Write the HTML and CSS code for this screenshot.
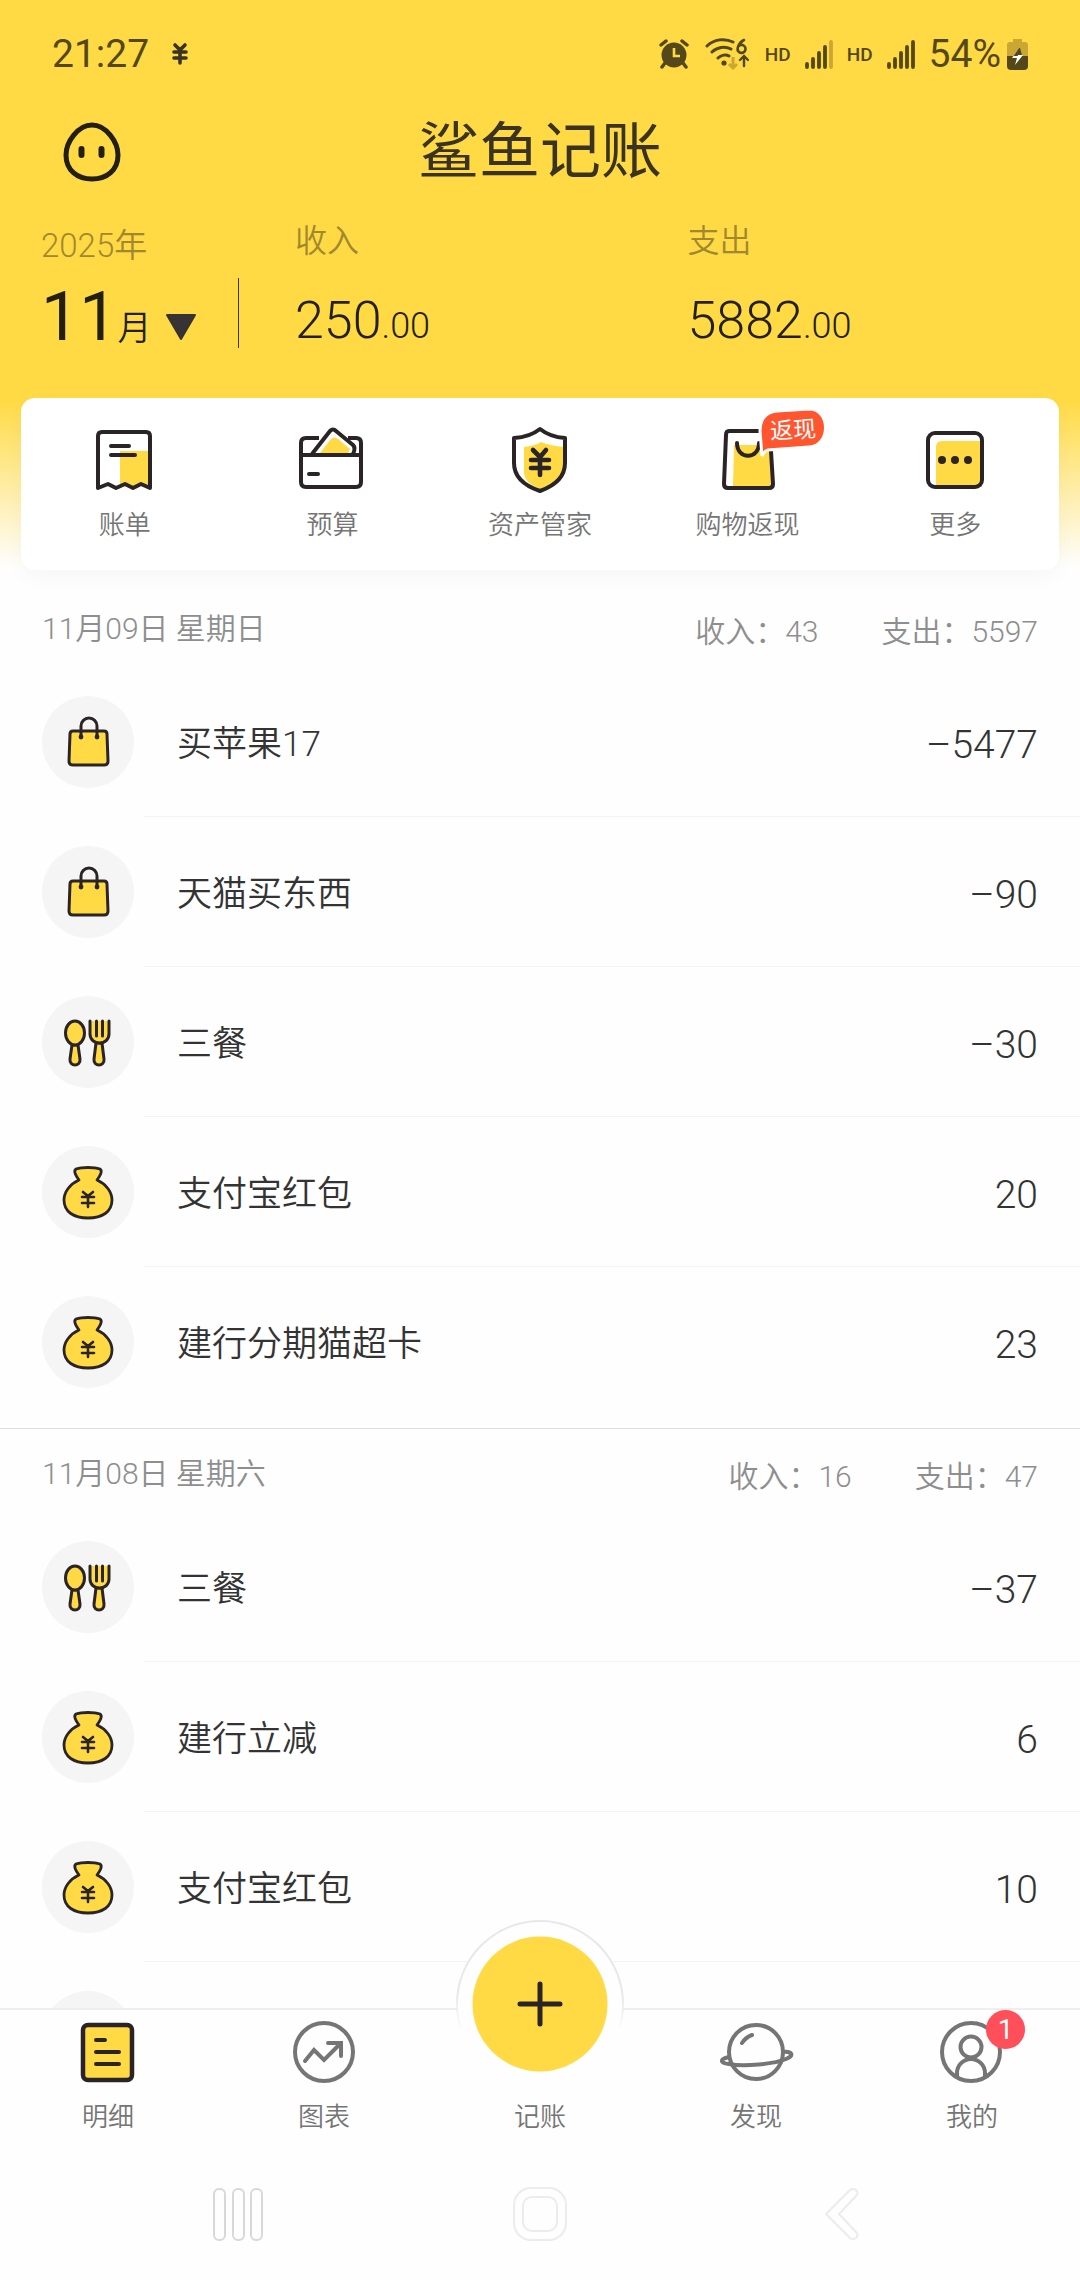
FILE: index.html
```html
<!DOCTYPE html>
<html lang="zh-CN">
<head>
<meta charset="utf-8">
<meta name="viewport" content="width=device-width, initial-scale=1">
<title>鲨鱼记账</title>
<link rel="stylesheet" href="styles.css">
</head>
<body>
<svg class="sprite" aria-hidden="true">
  <symbol id="shopping" viewBox="0 0 92 92">
    <path d="M31 35H62Q65 35 65 38L66 65Q66 69 62 69H31Q27 69 27 65L28 38Q28 35 31 35Z" fill="#ffda44" stroke="#2b2427" stroke-width="3"/>
    <path d="M39 41V30A8 8 0 0 1 55 30V41" fill="none" stroke="#2b2427" stroke-width="3"/>
    <circle cx="39" cy="41" r="2.4" fill="#2b2427"/><circle cx="55" cy="41" r="2.4" fill="#2b2427"/>
  </symbol>
  <symbol id="meal" viewBox="0 0 92 92">
    <g fill="#ffda44" stroke="#2b2427" stroke-width="3" stroke-linejoin="round" stroke-linecap="round">
      <path d="M30 49L28 63C27 71 39 71 38 63L36 49Z"/>
      <ellipse cx="33" cy="37" rx="9.5" ry="12"/>
      <path d="M54 47L52 63C51 71 63 71 62 63L60 47Z"/>
      <path d="M48 25V38C48 50 67 50 67 38V25"/>
      <path d="M54.500 25V40M60.500 25V40"/>
    </g>
  </symbol>
  <symbol id="money" viewBox="0 0 92 92">
    <path d="M37 34C34 30 31 25 34 23C40 21 52 21 58 23C61 25 58 30 55 34C64 38 70 46 70 54C70 66 60 72 46 72S22 66 22 54C22 46 28 38 37 34Z" fill="#ffda44" stroke="#2b2427" stroke-width="2.800" stroke-linejoin="round"/>
    <path d="M41 46L46 50L51 46M40 51H52M40 57H52M46 50V61" fill="none" stroke="#2b2427" stroke-width="2.600" stroke-linecap="round"/>
  </symbol>
  <symbol id="signal" viewBox="0 0 28 30">
    <path d="M2 25V28M8 20V28M14 14V28M20 8V28" fill="none" stroke="#54481b" stroke-width="3.800" stroke-linecap="round"/>
  </symbol>
</svg>

<div class="app">
  <main class="content">
    <header class="hero">
      <div class="status">
        <span class="status-time">21:27</span>
        <svg class="status-yen" viewBox="0 0 18 24" width="18" height="24" aria-hidden="true"><path d="M4 3L9 8L14 3M3 10H15M3 16H15M9 8V21" fill="none" stroke="#3a3322" stroke-width="3.600" stroke-linecap="round"/></svg>
        <svg class="status-alarm" viewBox="0 0 30 30" width="30" height="30" aria-hidden="true"><circle cx="15" cy="16" r="12.500" fill="#54481b"/><path d="M2 6L7 2M28 6L23 2M6 24L3 28M24 24L27 28" stroke="#54481b" stroke-width="3.500" stroke-linecap="round"/><path d="M15 9V17H21" fill="none" stroke="#ffda44" stroke-width="2.600"/></svg>
        <svg class="status-wifi" viewBox="0 0 44 32" width="44" height="32" aria-hidden="true">
          <g fill="none" stroke="#54481b" stroke-width="3" stroke-linecap="round"><path d="M2 8C9 1 20 0 28 4M7 14C12 9 20 8 26 11M13 20C16 17 21 16 24 18"/><path d="M39 2C33 5 31 12 34 14A4 4 0 1 0 33 9" stroke-width="2.600"/><path d="M39 28V19M35 22L39 18L43 22" stroke-width="2.400"/></g>
          <circle cx="19" cy="25" r="2.600" fill="#54481b"/><path d="M28 19V30M24 26L28 30L32 26" fill="none" stroke="#c9a732" stroke-width="3"/>
        </svg>
        <span class="status-hd">HD</span>
        <svg class="status-bars" width="28" height="30" aria-hidden="true"><use href="#signal"/><path d="M26 3V28" stroke="#c9a732" stroke-width="3.800" stroke-linecap="round"/></svg>
        <span class="status-hd">HD</span>
        <svg class="status-bars" width="28" height="30" aria-hidden="true"><use href="#signal"/><path d="M26 3V28" stroke="#54481b" stroke-width="3.800" stroke-linecap="round"/></svg>
        <span class="status-battery">54%</span>
        <svg viewBox="0 0 21 32" width="21" height="32" aria-hidden="true"><path d="M6 1H15V4H18Q21 4 21 7V18H0V7Q0 4 3 4H6Z" fill="#c9a732"/><path d="M0 18H21V28Q21 32 17 32H4Q0 32 0 28Z" fill="#54481b"/><path d="M12 10L5 20H10L8 27L16 17H11Z" fill="#fff"/><path d="M12 10L6.500 18H10.700L11 17H15L13 10Z" fill="#54481b"/></svg>
      </div>

      <div class="titlebar">
        <button class="avatar" type="button" aria-label="头像">
          <svg viewBox="0 0 60 60" width="60" height="60"><path d="M30 3C44 3 56 20 56 33C56 48 45 57 30 57S4 48 4 33C4 20 16 3 30 3Z" fill="none" stroke="#241f14" stroke-width="5"/><path d="M19.500 27V33M39.500 27V33" stroke="#241f14" stroke-width="6" stroke-linecap="round"/></svg>
        </button>
        <h1 class="logo">鲨鱼记账</h1>
      </div>

      <section class="summary">
        <div>
          <div class="year">2025年</div>
          <button class="month" type="button">
            <span class="month-number">11</span><span class="month-unit">月</span>
            <svg class="month-arrow" viewBox="0 0 30 26" width="30" height="26" aria-hidden="true"><path d="M1 1H29L15 25Z" fill="#373234" stroke="#373234" stroke-width="2" stroke-linejoin="round"/></svg>
            <span class="month-divider"></span>
          </button>
        </div>
        <div>
          <div class="summary-label">收入</div>
          <div class="summary-value">250<span class="cents">.00</span></div>
        </div>
        <div>
          <div class="summary-label">支出</div>
          <div class="summary-value">5882<span class="cents">.00</span></div>
        </div>
      </section>

      <nav class="shortcuts">
        <button class="shortcut" type="button">
          <svg class="icon" viewBox="0 0 64 64" aria-hidden="true"><path d="M27 23H57V58L48 56L40 60L32 56L27 58Z" fill="#ffda44"/><path d="M5 60V8Q5 4 9 4H53Q57 4 57 8V60L48 56L40 60L32 56L23 60L15 56Z" fill="none" stroke="#2b2427" stroke-width="4" stroke-linejoin="round"/><path d="M18 18H36M18 27H42" stroke="#2b2427" stroke-width="4" stroke-linecap="round"/></svg>
          账单
        </button>
        <button class="shortcut" type="button">
          <svg class="icon" viewBox="0 0 64 64" aria-hidden="true"><path d="M19 10H6Q1 10 1 15V54Q1 59 6 59H56Q61 59 61 54V15Q61 10 56 10H48M2 27H61" fill="none" stroke="#2b2427" stroke-width="4"/><path d="M20 25L31 11Q34 8 38 11L50 21L48 25Z" fill="#ffda44"/><path d="M12 26L30 3Q33 0 36 3L53 17Q56 20 53 26" fill="none" stroke="#2b2427" stroke-width="4" stroke-linejoin="round"/><path d="M9 46H18" stroke="#2b2427" stroke-width="4" stroke-linecap="round"/></svg>
          预算
        </button>
        <button class="shortcut" type="button">
          <svg class="icon" viewBox="0 0 64 64" aria-hidden="true"><path d="M16 19Q27 18 33 14Q43 18 56 19V35C56 49 45 57 32 61C22 57 16 52 16 44Z" fill="#ffda44"/><path d="M6 10Q22 9 32 1Q42 9 57 10V35C57 50 46 58 32 63C17 58 6 50 6 35Z" fill="none" stroke="#2b2427" stroke-width="4" stroke-linejoin="round"/><path d="M25 22L32 29L38 22M23 32H41M23 40H41M32 29V47" fill="none" stroke="#2b2427" stroke-width="4.600" stroke-linecap="round"/></svg>
          资产管家
        </button>
        <button class="shortcut" type="button">
          <svg class="icon" viewBox="0 0 64 64" aria-hidden="true"><path d="M18 17H54L56 59H17Z" fill="#ffda44"/><path d="M13 3H50Q54 3 54 7L57 56Q57 60 53 60H12Q8 60 8 56L10 7Q10 3 13 3Z" fill="none" stroke="#2b2427" stroke-width="4"/><path d="M21 15C21 32 43 32 43 15" fill="none" stroke="#2b2427" stroke-width="4" stroke-linecap="round"/></svg>
          <svg class="promo" viewBox="0 0 72 54" width="72" height="54"><path d="M21 4L53 2C75 2 75 39 53 40L12 43Q8 44 6 49L4 24C4 10 11 5 21 4Z" fill="#ff5630" stroke="#fff" stroke-width="3"/><text x="14" y="31" transform="rotate(-3 37 23)">返现</text></svg>
          购物返现
        </button>
        <button class="shortcut" type="button">
          <svg class="icon" viewBox="0 0 64 64" aria-hidden="true"><path d="M13 19Q13 13 19 13H59V59H13Z" fill="#ffda44"/><rect x="5" y="5" width="54" height="54" rx="7" fill="none" stroke="#2b2427" stroke-width="4"/><g fill="#2b2427"><circle cx="19" cy="32" r="4"/><circle cx="32" cy="32" r="4"/><circle cx="45" cy="32" r="4"/></g></svg>
          更多
        </button>
      </nav>
    </header>

    <section class="day">
      <div class="day-head"><h2 class="day-date">11月09日 星期日</h2><div class="day-totals"><span>收入：43</span><span>支出：5597</span></div></div>
      <ul class="records">
        <li class="record"><svg class="category"><use href="#shopping"/></svg><div class="record-body"><span>买苹果17</span><span class="amount">–5477</span></div></li>
        <li class="record"><svg class="category"><use href="#shopping"/></svg><div class="record-body"><span>天猫买东西</span><span class="amount">–90</span></div></li>
        <li class="record"><svg class="category"><use href="#meal"/></svg><div class="record-body"><span>三餐</span><span class="amount">–30</span></div></li>
        <li class="record"><svg class="category"><use href="#money"/></svg><div class="record-body"><span>支付宝红包</span><span class="amount">20</span></div></li>
        <li class="record"><svg class="category"><use href="#money"/></svg><div class="record-body"><span>建行分期猫超卡</span><span class="amount">23</span></div></li>
      </ul>
    </section>

    <section class="day">
      <div class="day-head"><h2 class="day-date">11月08日 星期六</h2><div class="day-totals"><span>收入：16</span><span>支出：47</span></div></div>
      <ul class="records">
        <li class="record"><svg class="category"><use href="#meal"/></svg><div class="record-body"><span>三餐</span><span class="amount">–37</span></div></li>
        <li class="record"><svg class="category"><use href="#money"/></svg><div class="record-body"><span>建行立减</span><span class="amount">6</span></div></li>
        <li class="record"><svg class="category"><use href="#money"/></svg><div class="record-body"><span>支付宝红包</span><span class="amount">10</span></div></li>
        <li class="record"><svg class="category"></svg><div class="record-body"></div></li>
      </ul>
    </section>
  </main>

  <footer class="footer">
    <nav class="tabs">
      <button class="tab" type="button">
        <svg class="icon" viewBox="0 0 64 64" aria-hidden="true"><rect x="7" y="5" width="49" height="55" rx="5" fill="#ffda44" stroke="#2b2427" stroke-width="4.500"/><path d="M20 20H29M20 32H43M20 44H43" stroke="#2b2427" stroke-width="4" stroke-linecap="round"/></svg>
        明细
      </button>
      <button class="tab" type="button">
        <svg class="icon outline" viewBox="0 0 64 64" aria-hidden="true"><circle cx="32" cy="32" r="29"/><path d="M13 41L22 30L32 40L48 24M36 23H49V36" stroke-linecap="round"/></svg>
        图表
      </button>
      <button class="tab" type="button">
        <span class="icon"></span>
        <svg class="add" viewBox="0 0 168 168" width="168" height="168" aria-hidden="true">
          <defs><linearGradient id="ring" x1="0" y1="0" x2="0" y2="1"><stop offset=".45" stop-color="#e8e8e8"/><stop offset=".66" stop-color="#e8e8e8" stop-opacity="0"/></linearGradient></defs>
          <circle cx="84" cy="84" r="83" fill="#fefefe" stroke="url(#ring)" stroke-width="2"/>
          <circle cx="84" cy="84" r="67.500" fill="#ffda44"/>
          <path d="M64 84H104M84 64V104" stroke="#2b2427" stroke-width="5" stroke-linecap="round"/>
        </svg>
        <span class="tab-text">记账</span>
      </button>
      <button class="tab" type="button">
        <svg class="icon outline" viewBox="0 0 64 64" aria-hidden="true"><circle cx="32" cy="32" r="27"/><path d="M5 37C-4 39-5 43 5 44C20 47 50 44 62 39C70 36 69 31 59 32M18 23Q22 17 28 15" stroke-linecap="round"/></svg>
        发现
      </button>
      <button class="tab" type="button">
        <svg class="icon outline" viewBox="0 0 64 64" aria-hidden="true"><circle cx="31" cy="32" r="29"/><circle cx="31" cy="27" r="10.500"/><path d="M17 56V53A14 14 0 0 1 45 53V56"/></svg>
        <span class="badge">1</span>
        我的
      </button>
    </nav>
    <div class="keys">
      <button class="key" type="button" aria-label="最近任务"><svg viewBox="0 0 54 54" width="54" height="54"><g fill="none" stroke="#d8d8d8" stroke-width="2"><rect x="3" y="2" width="11" height="51" rx="5"/><rect x="22" y="2" width="11" height="51" rx="5"/><rect x="40" y="2" width="11" height="51" rx="5"/></g></svg></button>
      <button class="key" type="button" aria-label="主屏幕"><svg viewBox="0 0 54 54" width="54" height="54"><g fill="none" stroke="#ececec" stroke-width="2"><rect x="1" y="1" width="52" height="52" rx="17"/><rect x="10" y="10" width="34" height="34" rx="9"/></g></svg></button>
      <button class="key" type="button" aria-label="返回"><svg viewBox="0 0 54 54" width="54" height="54"><path d="M11 27L35 3Q38 1 41 3Q44 6 41 9L24 27L41 45Q44 48 41 51Q38 53 35 51Z" fill="none" stroke="#ececec" stroke-width="2" stroke-linejoin="round"/></svg></button>
    </div>
  </footer>
</div>
</body>
</html>
```
FILE: styles.css
```css
* {
  box-sizing: border-box;
}

body {
  margin: 0;
  background: #fefefe;
  color: #333;
  font-family: Roboto, "Noto Sans CJK SC", sans-serif;
}

button {
  margin: 0;
  padding: 0;
  border: 0;
  background: none;
  color: inherit;
  font: inherit;
}

svg {
  display: block;
  flex: none;
}

.sprite {
  position: absolute;
  width: 0;
  height: 0;
}

.app {
  display: flex;
  flex-direction: column;
  height: 100vh;
}

.content {
  flex: 1;
  min-height: 0;
  overflow: hidden;
}

.icon {
  display: block;
  width: 64px;
  height: 64px;
  overflow: visible;
}

.outline {
  fill: none;
  stroke: #757575;
  stroke-width: 4;
}

/* Yellow header */

.hero {
  padding-bottom: 14px;
  background: linear-gradient(to top, #fefefe 16px, #ffda44 184px);
}

.status {
  display: flex;
  align-items: center;
  height: 108px;
  padding: 0 52px;
  color: #54481b;
  font-size: 39px;
}

.status-yen {
  margin-left: 22px;
  margin-right: auto;
}

.status-wifi {
  margin: 0 16px;
}

.status-hd {
  font-size: 19px;
  font-weight: 500;
}

.status-bars {
  margin: 0 14px;
}

.status-battery {
  margin-right: 6px;
}

.titlebar {
  display: grid;
  grid-template-columns: 1fr auto 1fr;
  align-items: center;
  height: 84px;
  padding: 0 62px;
}

.avatar {
  justify-self: start;
}

.logo {
  margin: 0;
  color: #3a3322;
  font-size: 61px;
  font-weight: 400;
  line-height: 88px;
}

.summary {
  display: grid;
  grid-template-columns: 254px 1fr 1fr;
  height: 206px;
  padding: 29px 0 0 41px;
}

.year,
.summary-label {
  color: #a1882f;
  font-size: 32px;
  font-weight: 350;
  line-height: 40px;
}

.year {
  font-size: 33px;
  line-height: 50px;
}

.month {
  display: flex;
  align-items: baseline;
  width: 198px;
  margin-top: 7px;
  color: #241f14;
  line-height: 78px;
}

.month-number {
  font-size: 68px;
}

.month-unit {
  font-size: 34px;
  font-weight: 350;
}

.month-arrow {
  margin-left: 15px;
}

.month-divider {
  align-self: flex-start;
  width: 1px;
  height: 70px;
  margin-left: auto;
  background: #3a3322;
}

.summary-value {
  margin-top: 30px;
  color: #241f14;
  font-size: 52px;
  font-weight: 300;
  line-height: 60px;
}

.cents {
  font-size: 36px;
}

.shortcuts {
  display: grid;
  grid-template-columns: repeat(5, 1fr);
  margin: 0 21px;
  padding: 30px 0 28px;
  border-radius: 14px;
  background: #fff;
  box-shadow: 0 8px 20px rgba(0, 0, 0, 0.03);
}

.shortcut,
.tab {
  position: relative;
  display: flex;
  flex-direction: column;
  align-items: center;
  color: #757575;
  font-size: 26px;
  font-weight: 350;
  line-height: 34px;
}

.shortcut {
  gap: 16px;
}

.promo {
  position: absolute;
  top: -21px;
  left: 50%;
  margin-left: 8px;
  fill: #fff;
  font-size: 23px;
  font-weight: 400;
}

/* Daily records */

.day {
  padding-bottom: 11px;
  border-bottom: 1px solid #dedede;
}

.day-head {
  display: flex;
  justify-content: space-between;
  align-items: center;
  height: 83px;
  padding: 0 42px;
  color: #8e8e8e;
  font-size: 30px;
  font-weight: 350;
}

.day-date {
  margin: 0;
  font-size: 30px;
  font-weight: 350;
}

.day-totals {
  display: flex;
  gap: 63px;
  padding-top: 6px;
}

.records {
  margin: 0;
  padding: 0;
  list-style: none;
}

.record {
  display: flex;
  align-items: center;
  height: 150px;
  padding-left: 42px;
}

.category {
  width: 92px;
  height: 92px;
  border-radius: 50%;
  background: #f5f5f5;
}

.record-body {
  display: flex;
  flex: 1;
  align-items: center;
  justify-content: space-between;
  height: 150px;
  margin-left: 10px;
  padding: 0 42px 2px 33px;
  border-bottom: 1px solid #f4f4f4;
  font-size: 35px;
  font-weight: 350;
}

.record:last-child .record-body {
  border-bottom-color: transparent;
}

.amount {
  padding-top: 8px;
  font-size: 39px;
  font-weight: 300;
}

/* Bottom bars */

.footer {
  position: relative;
  border-top: 2px solid #efefef;
  background: #fefefe;
}

.tabs {
  display: grid;
  grid-template-columns: repeat(5, 1fr);
}

.tab {
  gap: 16px;
  padding: 10px 0 14px;
}

.add {
  position: absolute;
  top: -90px;
  left: 50%;
  margin-left: -84px;
}

.tab-text {
  position: relative;
}

.badge {
  position: absolute;
  top: 0;
  left: 50%;
  width: 39px;
  height: 39px;
  margin-left: 14px;
  border-radius: 50%;
  background: #ff4f5a;
  color: #fff;
  font-size: 28px;
  font-weight: 400;
  line-height: 39px;
  text-align: center;
}

.keys {
  display: flex;
  align-items: center;
  justify-content: center;
  gap: 248px;
  height: 132px;
}
```
